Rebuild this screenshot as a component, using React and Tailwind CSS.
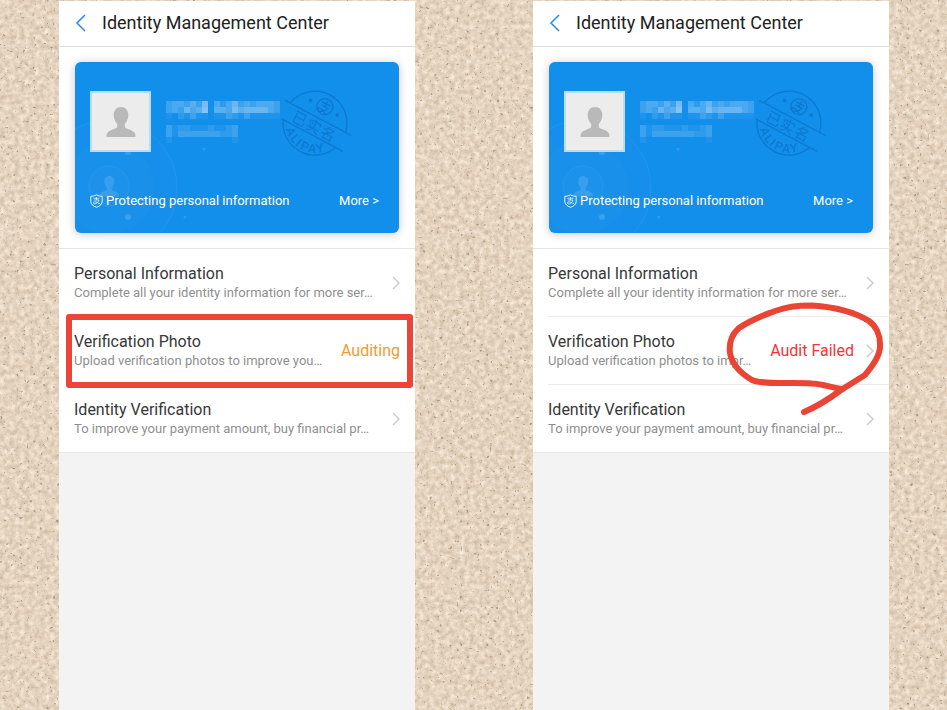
const NAME_MOSAIC = [
  [3, 4, 4, 3, 5, 3, 7, 0, 4, 2, 4, 6, 3, 4, 3, 4, 4, 4, 3],
  [3, 4, 3, 6, 4, 5, 8, 0, 5, 5, 4, 7, 5, 6, 6, 6, 6, 4, 3],
  [1, 0, 2, 1, 3, 1, 1, 0, 1, 1, 3, 2, 1, 3, 1, 1, 1, 1, 1],
];

const ACCOUNT_MOSAIC = [
  [3, 1, 2, 2, 1, 1, 1, 2, 1, 1, 2, 3],
  [3, 1, 3, 3, 3, 3, 3, 3, 3, 2, 2, 3],
  [1, 0, 0, 0, 0, 0, 0, 0, 0, 0, 0, 1],
];

function Mosaic({ cells }) {
  const cols = cells[0].length;
  return (
    <svg width={cols * 6} height={cells.length * 6} shapeRendering="crispEdges" aria-hidden="true">
      {cells.map((row, y) =>
        row.map((v, x) => (
          <rect key={`${x}-${y}`} x={x * 6} y={y * 6} width="6" height="6" fill="#fff" opacity={v * 0.06} />
        ))
      )}
    </svg>
  );
}

function SandTexture() {
  return (
    <svg className="absolute inset-0 h-full w-full" aria-hidden="true">
      <filter id="sand" x="0" y="0" width="100%" height="100%" colorInterpolationFilters="sRGB">
        <feTurbulence type="fractalNoise" baseFrequency="0.2" numOctaves="4" seed="8" />
        <feColorMatrix
          values="0.22 0 0 0 0.785
                  0.26 0 0 0 0.7
                  0.30 0 0 0 0.6
                  0 0 0 0 1"
        />
      </filter>
      <filter id="grit" x="0" y="0" width="100%" height="100%" colorInterpolationFilters="sRGB">
        <feTurbulence type="fractalNoise" baseFrequency="0.3" numOctaves="2" seed="21" />
        <feColorMatrix
          values="0 0 0 0 0.5
                  0 0 0 0 0.42
                  0 0 0 0 0.33
                  0 9 0 0 -6.2"
        />
      </filter>
      <rect width="100%" height="100%" filter="url(#sand)" />
      <rect width="100%" height="100%" filter="url(#grit)" opacity="0.5" />
    </svg>
  );
}

const PERSON =
  "M15 0c4.600 0 7.300 3.300 7.300 8 0 3.600-1.500 7-3.500 8.700v2.500c0 1 .5 1.600 1.500 2.100l5.200 2.300c2.700 1.200 4 2.700 4 5.400v1H.5v-1c0-2.700 1.300-4.200 4-5.400l5.200-2.300c1-.5 1.500-1.100 1.500-2.100v-2.500C9.200 15 7.700 11.600 7.700 8c0-4.700 2.700-8 7.300-8z";

function Avatar() {
  return (
    <div className="flex size-[61px] shrink-0 items-center justify-center border-2 border-[#b9dcf8] bg-[#ececec]">
      <svg width="30" height="30" viewBox="0 0 30 30" role="img" aria-label="Profile photo">
        <path d={PERSON} fill="#b9b9b9" />
      </svg>
    </div>
  );
}

function CardPattern() {
  return (
    <svg className="absolute inset-0 h-full w-full" aria-hidden="true">
      <g fill="#fff">
        <circle cx="34" cy="126" r="46" opacity="0.02" />
        <circle cx="34" cy="126" r="68" opacity="0.015" />
        <circle cx="34" cy="124" r="20" opacity="0.015" />
        <g opacity="0.12" transform="translate(24 114) scale(0.68)">
          <path d={PERSON} />
        </g>
        <circle cx="53" cy="90" r="3" opacity="0.14" />
        <circle cx="53" cy="155" r="3" opacity="0.14" />
        <circle cx="129" cy="87" r="1.500" opacity="0.12" />
        <circle cx="110" cy="155" r="1.500" opacity="0.12" />
      </g>
      <circle cx="34" cy="126" r="68" fill="none" stroke="#fff" opacity="0.07" />
      <circle cx="34" cy="124" r="20" fill="none" stroke="#fff" opacity="0.05" />
    </svg>
  );
}

function Stamp({ id }) {
  return (
    <svg
      className="absolute top-[21px] right-11"
      width="80"
      height="80"
      viewBox="-40 -40 80 80"
      role="img"
      aria-label="Verified by Alipay"
    >
      <g transform="rotate(28)" fill="none" stroke="#0c6ec0" strokeWidth="1.300" opacity="0.65">
        <path d="M-31.400-6A32 32 0 0 1 31.400-6M-29.700 12A32 32 0 0 0 29.700 12" />
        <path d="M-37-6H38M-31 12H38" />
        <circle cx="1" cy="-19" r="8" />
        <path d="M-3.500-22h9M1-25v6M-2.500-19h7c-1 3.500-3.500 6-7 6.500-2.500 0-2.500-3 0-3 3 0 5 1.500 7.500 3" />
        <path id={id} d="M-26 14A29.500 29.500 0 0 0 26 14" stroke="none" />
        <g fill="#0c6ec0" stroke="none">
          <circle cx="-14.500" cy="-18" r="1.800" />
          <circle cx="16" cy="-17.500" r="1.800" />
          <text x="-23 -7 9" y="9" className="font-['Noto_Sans_CJK_SC',sans-serif] text-[15px]">
            已实名
          </text>
          <text x="6 16 24 30 39 48" className="font-['Roboto',sans-serif] text-[12px] font-medium">
            <textPath href={`#${id}`}>ALIPAY</textPath>
          </text>
        </g>
      </g>
    </svg>
  );
}

function ShieldIcon() {
  return (
    <svg width="13" height="14" viewBox="0 0 13 14" fill="none" stroke="#fff" aria-hidden="true">
      <path
        d="M6.500.8c1.700 1 3.600 1.500 5.700 1.500v4.900c0 3-2.300 5-5.700 6.100C3.100 12.200.8 10.200.8 7.200V2.300c2.100 0 4-.5 5.700-1.500z"
        strokeWidth="0.900"
      />
      <path
        d="M3.500 4.300h6M6.500 3v3M4 6h5c-.6 2-2.200 3.700-4.300 3.900-1.800 0-1.800-2 0-2 2.200 0 3.600 1.200 5.500 2"
        strokeWidth="0.800"
        opacity="0.85"
      />
    </svg>
  );
}

function IdentityCard({ stampId }) {
  return (
    <section className="relative h-[171px] overflow-hidden rounded-md bg-[#128eeb] text-white shadow-[0_1px_10px_rgba(0,0,0,0.22)]">
      <CardPattern />
      <Stamp id={stampId} />
      <div className="relative flex h-full flex-col justify-between pt-[29px] pr-5 pb-[22px] pl-[15px]">
        <div className="flex gap-[15px]">
          <Avatar />
          <div className="flex flex-col gap-[6px] pt-[10px]">
            <Mosaic cells={NAME_MOSAIC} />
            <Mosaic cells={ACCOUNT_MOSAIC} />
          </div>
        </div>
        <div className="flex items-center justify-between text-[13px] leading-5">
          <p className="flex items-center gap-[3px] whitespace-nowrap">
            <ShieldIcon />
            Protecting personal information
          </p>
          <a href="#more" className="whitespace-nowrap">
            More &gt;
          </a>
        </div>
      </div>
    </section>
  );
}

function RowChevron() {
  return (
    <svg
      className="shrink-0"
      width="8"
      height="14"
      viewBox="0 0 8 14"
      fill="none"
      stroke="#cdcdcd"
      strokeWidth="1.500"
      aria-hidden="true"
    >
      <path d="M1 1l6 6-6 6" />
    </svg>
  );
}

function BoxMark() {
  return (
    <span className="pointer-events-none absolute -top-[3px] right-[2px] -bottom-1 left-[7px] rounded-[3px] border-6 border-[#ea4536]" />
  );
}

function HandDrawnMark() {
  return (
    <svg
      className="pointer-events-none absolute -top-[17px] right-0"
      width="168"
      height="120"
      viewBox="721 300 168 120"
      fill="none"
      stroke="#ea4435"
      strokeWidth="6"
      strokeLinecap="round"
      strokeLinejoin="round"
      aria-hidden="true"
    >
      <path d="M804 412C816 407 829 399 841 390L865 375C874 364 881 354 880 344C880 335 876 326 869 321C853 311 835 307 812 305.500C795 305.500 787 307 775 311C762 316 752 319 739 328C730 336 729 345 730 353C732 364 740 373 752 380C764 385 790 382 812 383.500C824 384 832 388 843 389" />
    </svg>
  );
}

function Row({ title, detail, status, chevron = true, mark }) {
  return (
    <li className="relative">
      <a href="#details" className="flex h-[67px] items-center justify-between gap-3 px-[15px]">
        <span className="min-w-0 whitespace-nowrap">
          <span className="block text-base leading-5 text-[#383838]">{title}</span>
          <span className="block text-[13px] leading-[18px] text-[#8f8f8f]">{detail}</span>
        </span>
        <span className="flex shrink-0 items-center gap-3 text-base leading-5">
          {status}
          {chevron && <RowChevron />}
        </span>
      </a>
      {mark}
    </li>
  );
}

function Divider() {
  return <li role="separator" className="ml-[15px] h-px bg-[#ececec]" />;
}

function Phone({ stampId, photo }) {
  return (
    <main className="flex min-w-0 flex-1 flex-col bg-[#f3f3f3]">
      <header className="flex h-[46px] items-center gap-4 border-b border-[#dedede] bg-white pb-px pl-4">
        <button type="button" aria-label="Back">
          <svg width="11" height="18" viewBox="0 0 11 18" fill="none" stroke="#2e8af5" strokeWidth="1.600">
            <path d="M10 1L2 9l8 8" />
          </svg>
        </button>
        <h1 className="text-lg leading-6 whitespace-nowrap text-[#222]">Identity Management Center</h1>
      </header>
      <div className="bg-white px-4 py-[15px]">
        <IdentityCard stampId={stampId} />
      </div>
      <ul className="border-y border-[#e6e6e6] bg-white">
        <Row title="Personal Information" detail="Complete all your identity information for more ser…" />
        <Divider />
        <Row title="Verification Photo" {...photo} />
        <Divider />
        <Row title="Identity Verification" detail="To improve your payment amount, buy financial pr…" />
      </ul>
    </main>
  );
}

export default function App() {
  return (
    <div className="relative min-h-screen overflow-hidden bg-[#e0d0ba] font-['Roboto',sans-serif]">
      <SandTexture />
      <div className="relative flex min-h-screen gap-[118px] pt-px pr-[58px] pl-[59px]">
        <Phone
          stampId="stamp-arc-auditing"
          photo={{
            detail: "Upload verification photos to improve you…",
            status: <span className="text-[#f79a2b]">Auditing</span>,
            chevron: false,
            mark: <BoxMark />,
          }}
        />
        <Phone
          stampId="stamp-arc-failed"
          photo={{
            detail: "Upload verification photos to impr…",
            status: <span className="text-[#f4333c]">Audit Failed</span>,
            mark: <HandDrawnMark />,
          }}
        />
      </div>
    </div>
  );
}
